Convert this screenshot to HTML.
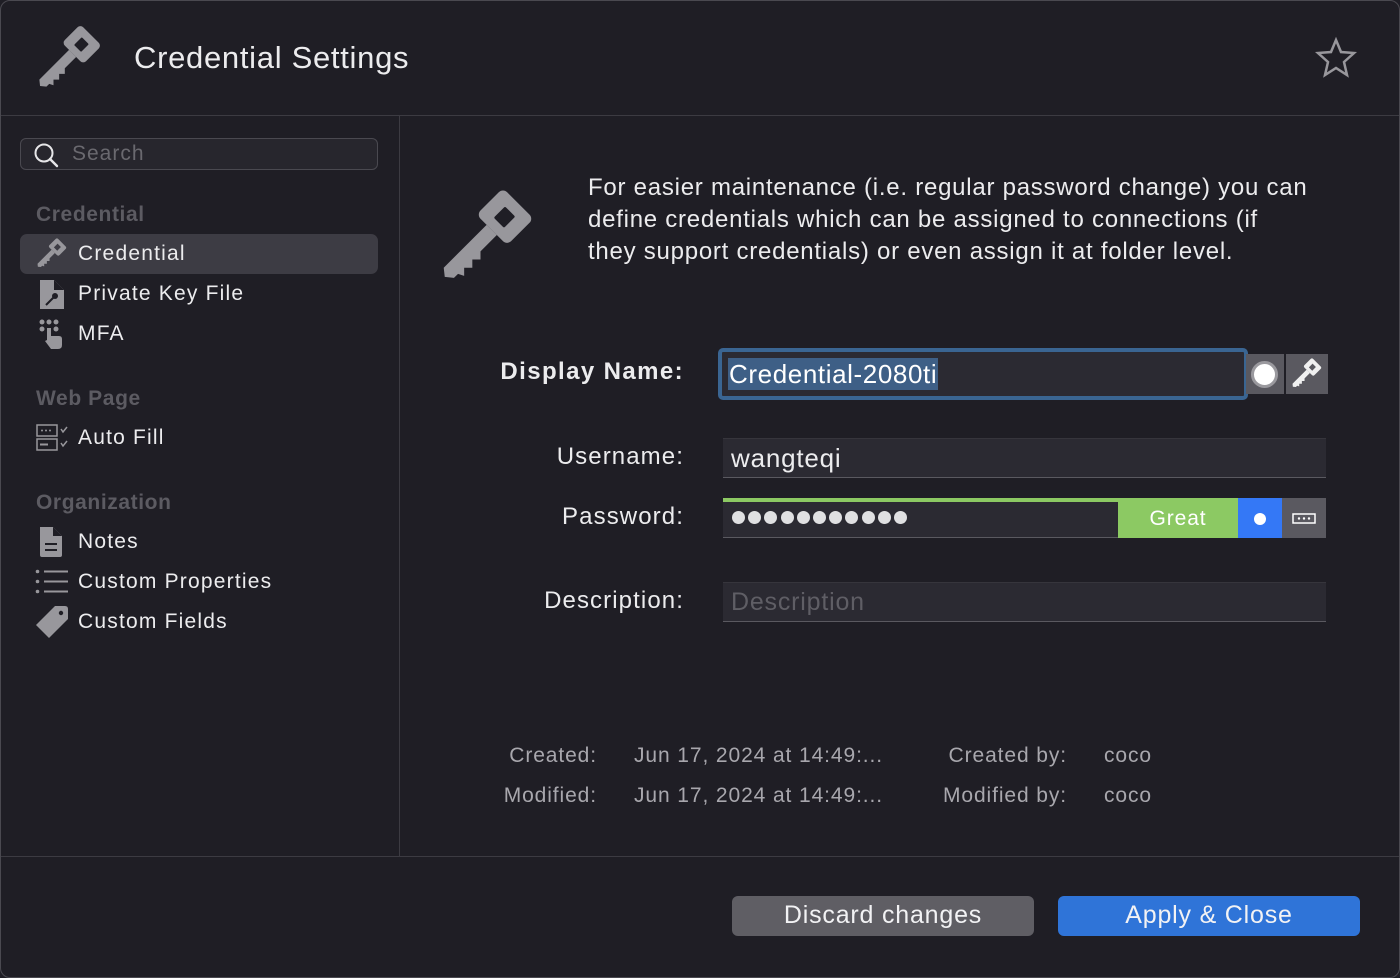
<!DOCTYPE html>
<html><head><meta charset="utf-8"><style>
*{margin:0;padding:0;box-sizing:border-box}
body{width:1400px;height:978px;background:#1f1e25;font-family:"Liberation Sans",sans-serif;color:#e6e6e8;position:relative;overflow:hidden;letter-spacing:0.9px}
.frame{position:absolute;left:0;top:0;width:1400px;height:978px;border:1px solid #4a4950;border-radius:10px}
.abs{position:absolute}
.hline{position:absolute;height:1px;background:#3c3b42}
.vline{position:absolute;width:1px;background:#3c3b42}
.sec{position:absolute;left:36px;font-size:21px;font-weight:bold;color:#5c5b62;letter-spacing:0.6px}
.item{position:absolute;left:78px;font-size:21px;color:#ececee;letter-spacing:1.2px}
.lbl{position:absolute;font-size:24px;text-align:right;color:#ececee;letter-spacing:1.1px}
.field{position:absolute;background:#2b2a32;border-bottom:1px solid #5a5960;border-top:1px solid #36353c}
.meta{position:absolute;font-size:21px;color:#a8a7ad}
.metav{position:absolute;font-size:21px;color:#a8a7ad}
.dot{display:inline-block;width:13px;height:13px;border-radius:50%;background:#e0e0e2;margin-right:3.2px}
</style></head><body>
<div class="frame"></div>
<svg class="abs" style="left:34px;top:26px" width="72" height="66" viewBox="0 0 72 66">
<g transform="translate(40,26) rotate(-45)" fill="#98979c">
<rect x="-2" y="-15" width="26" height="30" rx="4"/>
<rect x="5" y="-5" width="11" height="10" fill="#1f1e25" rx="1"/>
<path d="M-2 -5 L-44 -5 L-48 0 L-44 5 L-40 5 L-38 9 L-34 5 L-30 9 L-26 5 L-22 9 L-18 5 L-2 5Z"/>
</g></svg>
<div class="abs" style="left:134px;top:40px;font-size:31px;color:#ececee;letter-spacing:0.7px">Credential Settings</div>
<svg class="abs" style="left:1314px;top:36px" width="44" height="44" viewBox="0 0 44 44"><path d="M22 4 L27 16 L40 17 L30 26 L33 39 L22 32 L11 39 L14 26 L4 17 L17 16Z" fill="none" stroke="#98979c" stroke-width="2.5" stroke-linejoin="miter"/></svg>
<div class="hline" style="left:1px;top:115px;width:1398px"></div>
<div class="vline" style="left:399px;top:116px;height:740px"></div>
<div class="hline" style="left:1px;top:856px;width:1398px"></div>

<div class="abs" style="left:20px;top:138px;width:358px;height:32px;border:1px solid #4a4950;border-radius:6px;background:#27262d"></div>
<svg class="abs" style="left:32px;top:141px" width="28" height="28" viewBox="0 0 28 28"><circle cx="12" cy="12" r="8.5" fill="none" stroke="#e6e6e8" stroke-width="2"/><path d="M18 18 L25 25" stroke="#e6e6e8" stroke-width="2.4" stroke-linecap="round"/></svg>
<div class="abs" style="left:72px;top:142px;font-size:21px;color:#6a696f;letter-spacing:1px">Search</div>

<div class="sec" style="top:203px">Credential</div>
<div class="abs" style="left:20px;top:234px;width:358px;height:40px;background:#3d3c44;border-radius:7px"></div>
<svg class="abs" style="left:35px;top:238px" width="34" height="32" viewBox="0 0 72 66"><g transform="translate(40,26) rotate(-45)" fill="#98979c"><rect x="-2" y="-15" width="26" height="30" rx="4"/><rect x="5" y="-5" width="11" height="10" fill="#3d3c44"/><path d="M-2 -5 L-44 -5 L-48 0 L-44 5 L-40 5 L-38 9 L-34 5 L-30 9 L-26 5 L-22 9 L-18 5 L-2 5Z"/></g></svg>
<div class="item" style="top:242px">Credential</div>
<svg class="abs" style="left:38px;top:278px" width="28" height="33" viewBox="0 0 28 33"><path d="M2 2 H16 L26 12 V31 H2Z" fill="#98979c"/><path d="M16 2 V12 H26" fill="#1f1e25"/><path d="M8 27 L16 19" stroke="#1f1e25" stroke-width="2"/><circle cx="17" cy="18" r="3" fill="#1f1e25"/></svg>
<div class="item" style="top:282px">Private Key File</div>
<svg class="abs" style="left:38px;top:318px" width="28" height="32" viewBox="0 0 28 32"><g fill="#98979c"><circle cx="4" cy="4" r="2.5"/><circle cx="11" cy="4" r="2.5"/><circle cx="18" cy="4" r="2.5"/><circle cx="4" cy="11" r="2.5"/><circle cx="18" cy="11" r="2.5"/><path d="M9 10 h4 v8 h8 q3 0 3 3 v6 q0 4 -4 4 h-7 l-6 -8 l2 -1 l0 0Z"/></g></svg>
<div class="item" style="top:322px">MFA</div>

<div class="sec" style="top:387px">Web Page</div>
<svg class="abs" style="left:36px;top:424px" width="34" height="28" viewBox="0 0 34 28"><g fill="none" stroke="#98979c" stroke-width="1.5"><rect x="1" y="1" width="20" height="11"/><rect x="1" y="15" width="20" height="11"/><path d="M25 5 l2 3 l4 -5 M25 19 l2 3 l4 -5"/></g><g fill="#98979c"><circle cx="6" cy="6.5" r="1"/><circle cx="10" cy="6.5" r="1"/><circle cx="14" cy="6.5" r="1"/><rect x="4" y="19.5" width="8" height="2"/></g></svg>
<div class="item" style="top:426px">Auto Fill</div>

<div class="sec" style="top:491px">Organization</div>
<svg class="abs" style="left:38px;top:525px" width="26" height="34" viewBox="0 0 26 34"><path d="M2 2 H15 L24 11 V30 q0 2 -2 2 H4 q-2 0 -2 -2Z" fill="#98979c"/><path d="M15 2 V11 H24" fill="#1f1e25"/><rect x="7" y="18" width="12" height="2" fill="#1f1e25"/><rect x="7" y="24" width="12" height="2" fill="#1f1e25"/></svg>
<div class="item" style="top:530px">Notes</div>
<svg class="abs" style="left:35px;top:569px" width="34" height="26" viewBox="0 0 34 26"><g fill="#98979c"><circle cx="2.5" cy="2.5" r="1.8"/><circle cx="2.5" cy="12.5" r="1.8"/><circle cx="2.5" cy="22.5" r="1.8"/><rect x="9" y="1.5" width="24" height="2"/><rect x="9" y="11.5" width="24" height="2"/><rect x="9" y="21.5" width="24" height="2"/></g></svg>
<div class="item" style="top:570px">Custom Properties</div>
<svg class="abs" style="left:35px;top:605px" width="34" height="34" viewBox="0 0 34 34"><path d="M20 1 H30 q3 0 3 3 V14 L14 33 L1 20Z" fill="#98979c"/><circle cx="26" cy="8" r="2.2" fill="#1f1e25"/></svg>
<div class="item" style="top:610px">Custom Fields</div>

<svg class="abs" style="left:436px;top:188px" width="104" height="100" viewBox="0 0 72 66"><g transform="translate(40,26) rotate(-45)" fill="#98979c"><rect x="-2" y="-15" width="26" height="30" rx="4"/><rect x="5" y="-5" width="11" height="10" fill="#1f1e25" rx="1"/><path d="M-2 -5 L-44 -5 L-48 0 L-44 5 L-40 5 L-38 9 L-34 5 L-30 9 L-26 5 L-22 9 L-18 5 L-2 5Z"/></g></svg>
<div class="abs" style="left:588px;top:172px;width:790px;font-size:24px;line-height:32px;color:#ececee;letter-spacing:0.75px">For easier maintenance (i.e. regular password change) you can define credentials which can be assigned to connections (if<br>they support credentials) or even assign it at folder level.</div>

<div class="lbl" style="right:716px;top:358px;font-weight:bold;letter-spacing:1.4px">Display Name:</div>
<div class="abs" style="left:718px;top:348px;width:530px;height:52px;border:4px solid #3a6592;border-radius:5px;background:#2b2a32"></div>
<div class="abs" style="left:728px;top:358px;height:32px;background:#3e5f86;font-size:26px;line-height:32px;color:#fff;padding:0 1px;letter-spacing:0.6px">Credential-2080ti</div>
<div class="abs" style="left:1246px;top:354px;width:38px;height:40px;background:#5a5960"></div>
<div class="abs" style="left:1251px;top:361px;width:27px;height:27px;border-radius:50%;background:#fff;border:3px solid #9a999e"></div>
<div class="abs" style="left:1286px;top:354px;width:42px;height:40px;background:#5a5960"></div>
<svg class="abs" style="left:1290px;top:357px" width="34" height="34" viewBox="0 0 72 66"><g transform="translate(40,26) rotate(-45)" fill="#f0f0f0"><rect x="-2" y="-15" width="26" height="30" rx="4"/><rect x="5" y="-5" width="11" height="10" fill="#5a5960"/><path d="M-2 -5 L-44 -5 L-48 0 L-44 5 L-40 5 L-38 9 L-34 5 L-30 9 L-26 5 L-22 9 L-18 5 L-2 5Z"/></g></svg>

<div class="lbl" style="right:716px;top:443px">Username:</div>
<div class="field" style="left:723px;top:438px;width:603px;height:40px"></div>
<div class="abs" style="left:731px;top:443px;font-size:26px;color:#ececee;letter-spacing:0.8px">wangteqi</div>

<div class="lbl" style="right:716px;top:503px">Password:</div>
<div class="field" style="left:723px;top:498px;width:603px;height:40px"></div>
<div class="abs" style="left:723px;top:498px;width:395px;height:4px;background:#8cc963"></div>
<div class="abs" style="left:732px;top:511px;height:14px;white-space:nowrap;line-height:0"><span class="dot"></span><span class="dot"></span><span class="dot"></span><span class="dot"></span><span class="dot"></span><span class="dot"></span><span class="dot"></span><span class="dot"></span><span class="dot"></span><span class="dot"></span><span class="dot"></span></div>
<div class="abs" style="left:1118px;top:498px;width:120px;height:40px;background:#8cc963;font-size:21px;color:#fff;text-align:center;line-height:42px">Great</div>
<div class="abs" style="left:1238px;top:498px;width:44px;height:40px;background:#3478f6"></div>
<div class="abs" style="left:1254px;top:513px;width:12px;height:12px;border-radius:50%;background:#fff"></div>
<div class="abs" style="left:1282px;top:498px;width:44px;height:40px;background:#5a5960"></div>
<svg class="abs" style="left:1292px;top:513px" width="24" height="12" viewBox="0 0 24 12"><rect x="1" y="1" width="22" height="9" fill="none" stroke="#fff" stroke-width="1.5"/><g fill="#fff"><circle cx="7" cy="5.5" r="1.2"/><circle cx="12" cy="5.5" r="1.2"/><circle cx="17" cy="5.5" r="1.2"/></g></svg>

<div class="lbl" style="right:716px;top:587px">Description:</div>
<div class="field" style="left:723px;top:582px;width:603px;height:40px"></div>
<div class="abs" style="left:731px;top:588px;font-size:25px;color:#5f5e65;letter-spacing:0.8px">Description</div>

<div class="meta" style="right:803px;top:744px">Created:</div>
<div class="meta" style="right:803px;top:784px">Modified:</div>
<div class="metav" style="left:634px;top:744px">Jun 17, 2024 at 14:49:...</div>
<div class="metav" style="left:634px;top:784px">Jun 17, 2024 at 14:49:...</div>
<div class="meta" style="right:333px;top:744px">Created by:</div>
<div class="meta" style="right:333px;top:784px">Modified by:</div>
<div class="metav" style="left:1104px;top:744px">coco</div>
<div class="metav" style="left:1104px;top:784px">coco</div>

<div class="abs" style="left:732px;top:896px;width:302px;height:40px;background:#5f5e64;border-radius:6px;font-size:25px;color:#f2f2f4;text-align:center;line-height:38px;letter-spacing:0.8px">Discard changes</div>
<div class="abs" style="left:1058px;top:896px;width:302px;height:40px;background:#2f74d8;border-radius:6px;font-size:25px;color:#f2f2f4;text-align:center;line-height:38px;letter-spacing:0.8px">Apply &amp; Close</div>
</body></html>
